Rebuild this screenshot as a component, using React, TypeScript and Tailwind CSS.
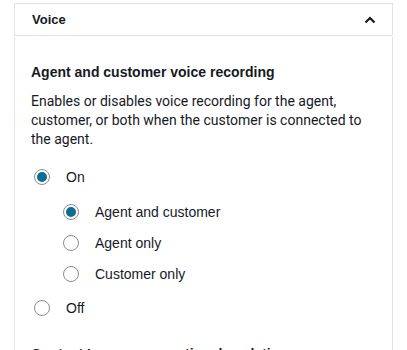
import React from "react";

function Radio({ checked, label }: { checked?: boolean; label: string }) {
  return (
    <div className="flex items-center h-[20px]">
      <span className="relative w-[16px] h-[16px] rounded-full border border-[#8d8d8d] bg-white flex items-center justify-center shrink-0">
        {checked && <span className="w-[10px] h-[10px] rounded-full bg-[#0b6e91]" />}
      </span>
      <span className="ml-[16px] text-[14px] text-[#16191f]">{label}</span>
    </div>
  );
}

export default function App() {
  return (
    <div
      className="w-[407px] h-[350px] overflow-hidden bg-white pt-[3px] px-[14px]"
      style={{ fontFamily: '"Liberation Sans", Arial, sans-serif' }}
    >
      <div className="border border-[#e3e3e3] h-[33px] flex items-center justify-between pl-[17px] pr-[16px]">
        <span className="font-bold text-[13px] text-[#16191f]">Voice</span>
        <svg width="12" height="8" viewBox="0 0 12 8" className="mt-[1px]">
          <path d="M1.5 6.5 L6 2 L10.5 6.5" fill="none" stroke="#16191f" strokeWidth="2.2" />
        </svg>
      </div>
      <div className="mt-[1px] border-x border-[#e3e3e3] h-[400px] pl-[16px] pr-[16px] pt-[26px]">
        <div className="font-bold text-[14px] text-[#16191f] leading-[18px]">
          Agent and customer voice recording
        </div>
        <div
          className="mt-[11px] text-[14px] leading-[19px] text-[#16191f]"
          style={{ fontFamily: 'Roboto, "Liberation Sans", sans-serif' }}
        >
          Enables or disables voice recording for the agent, customer, or both when the customer is connected to
          the agent.
        </div>
        <div className="mt-[18px] pl-[3px]">
          <Radio checked label="On" />
          <div className="pl-[29px] mt-[15px] flex flex-col">
            <Radio checked label="Agent and customer" />
            <div className="mt-[11px]">
              <Radio label="Agent only" />
            </div>
            <div className="mt-[11px]">
              <Radio label="Customer only" />
            </div>
          </div>
          <div className="mt-[14px]">
            <Radio label="Off" />
          </div>
        </div>
        <div className="mt-[26px] font-bold text-[14px] text-[#16191f]">
          Contact Lens conversational analytics
        </div>
      </div>
    </div>
  );
}
